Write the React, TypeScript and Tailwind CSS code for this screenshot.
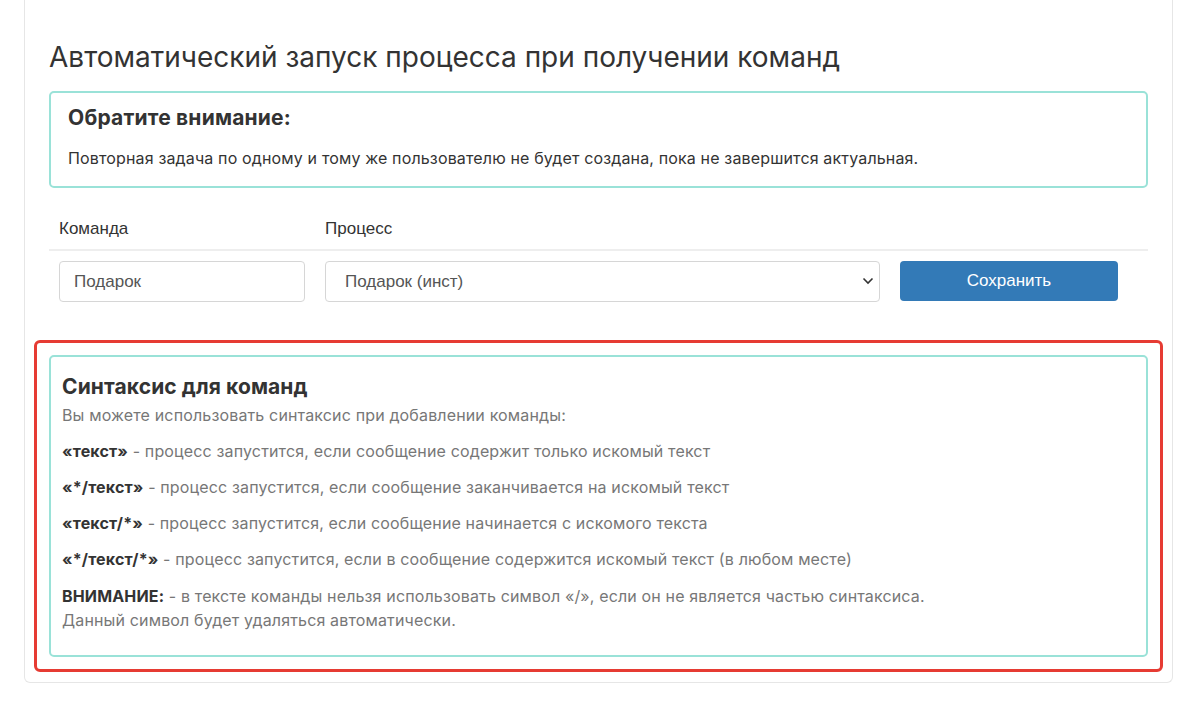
const rules = [
  { code: '«текст»', text: 'процесс запустится, если сообщение содержит только искомый текст' },
  { code: '«*/текст»', text: 'процесс запустится, если сообщение заканчивается на искомый текст' },
  { code: '«текст/*»', text: 'процесс запустится, если сообщение начинается с искомого текста' },
  { code: '«*/текст/*»', text: 'процесс запустится, если в сообщение содержится искомый текст (в любом месте)' },
];

export default function App() {
  return (
    <div className="min-h-[706px] bg-white font-['Inter',sans-serif] text-[#333]">
      <div className="ml-[24px] w-[1149px] rounded-b-[6px] border-x border-b border-[#e6e6e6] px-[9px] pb-[10px]">
        <div className="px-[15px]">
          <h1 className="pt-[40px] text-[28px] font-normal leading-[34px] text-[#333]">
            Автоматический запуск процесса при получении команд
          </h1>

          {/* Note */}
          <div className="mt-[17px] h-[97px] rounded-[5px] border-2 border-[#9ae2d8] px-[17px] pt-[12px]">
            <h4 className="text-[21px] font-bold leading-[26px] tracking-[0.2px]">Обратите внимание:</h4>
            <p className="mt-[16px] text-[16px] leading-[22px] tracking-[0.15px] text-[#333]">
              Повторная задача по одному и тому же пользователю не будет создана, пока не завершится актуальная.
            </p>
          </div>

          {/* Command table */}
          <div className="mt-[26px] font-['Liberation_Sans',sans-serif]">
            <div className="flex border-b-2 border-[#eeeeee] pb-[5px] text-[17px] leading-[30px] text-[#333]">
              <div className="w-[266px] pl-[10px]">Команда</div>
              <div className="pl-[10px]">Процесс</div>
            </div>
            <div className="flex items-start pt-[10px]">
              <div className="w-[266px] px-[10px]">
                <input
                  defaultValue="Подарок"
                  className="h-[41px] w-[246px] rounded-[4px] border border-[#d6d6d6] px-[14px] text-[17px] text-[#555] outline-none"
                />
              </div>
              <div className="w-[575px] px-[10px]">
                <div className="relative">
                  <select
                    defaultValue="gift"
                    className="h-[41px] w-full appearance-none rounded-[4px] border border-[#d6d6d6] bg-white px-[19px] text-[17px] text-[#555] outline-none"
                  >
                    <option value="gift">Подарок (инст)</option>
                  </select>
                  <svg
                    className="pointer-events-none absolute right-[6px] top-[15px]"
                    width="12"
                    height="10"
                    viewBox="0 0 12 10"
                    fill="none"
                  >
                    <path d="M1.5 2.5 6 7l4.5-4.5" stroke="#333" strokeWidth="1.6" />
                  </svg>
                </div>
              </div>
              <div className="px-[10px]">
                <button className="h-[40px] w-[218px] rounded-[4px] bg-[#337ab7] text-[17px] text-white">
                  Сохранить
                </button>
              </div>
            </div>
          </div>
        </div>

        {/* Highlighted syntax help */}
        <div className="mt-[38px] rounded-[6px] border-[3px] border-[#e63b33] p-[12px]">
          <div className="rounded-[5px] border-2 border-[#9ae2d8] px-[11px] pb-[23px] pt-[17px]">
            <h4 className="text-[21px] font-bold leading-[26px] tracking-[0.1px] text-[#333]">Синтаксис для команд</h4>
            <p className="mt-[3px] text-[16px] leading-[24px] tracking-[0.15px] text-[#777]">
              Вы можете использовать синтаксис при добавлении команды:
            </p>
            {rules.map((r) => (
              <p key={r.code} className="mt-[12px] text-[16px] leading-[24px] tracking-[0.15px] text-[#777]">
                <b className="font-bold text-[#333]">{r.code}</b> - {r.text}
              </p>
            ))}
            <p className="mt-[13px] text-[16px] leading-[24px] tracking-[0.15px] text-[#777]">
              <b className="font-bold text-[#333]">ВНИМАНИЕ:</b> - в тексте команды нельзя использовать символ «/», если он не является частью синтаксиса.
              <br />
              Данный символ будет удаляться автоматически.
            </p>
          </div>
        </div>
      </div>
    </div>
  );
}
